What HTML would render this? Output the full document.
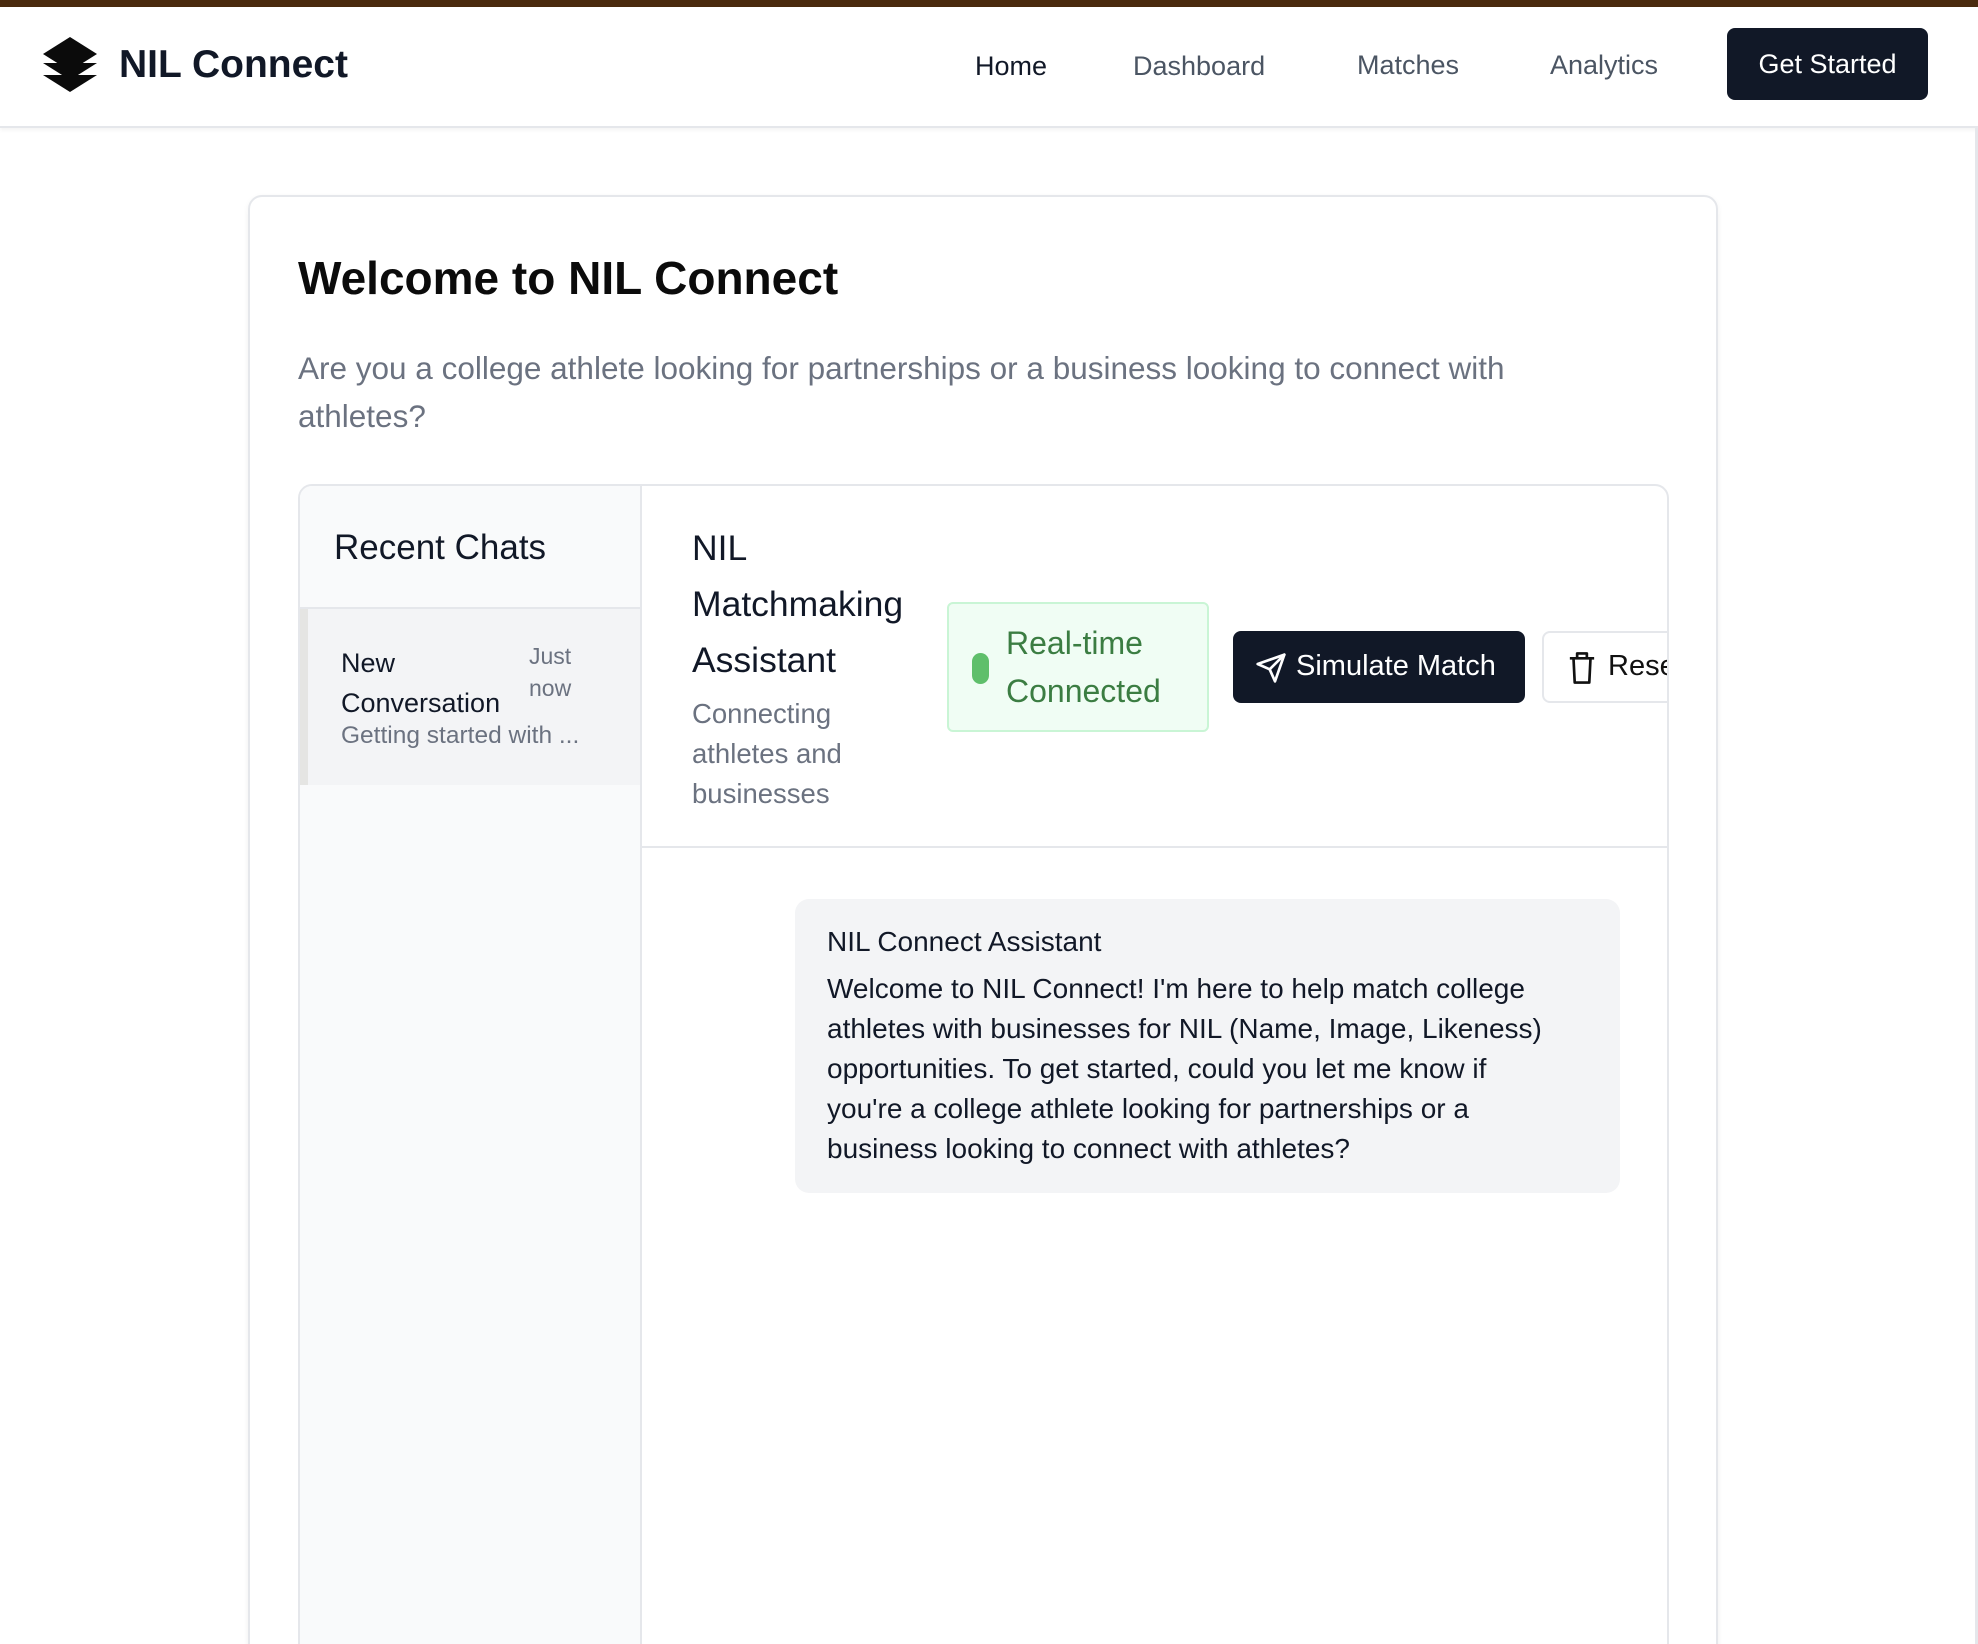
<!DOCTYPE html>
<html><head><meta charset="utf-8"><style>
*{margin:0;padding:0;box-sizing:border-box}
html,body{width:1978px;height:1644px;overflow:hidden}
body{background:#fff;font-family:"Liberation Sans",sans-serif;color:#111827;position:relative}
#w{position:absolute;left:0;top:0;width:1978px;height:1644px;overflow:hidden}
.a{position:absolute;white-space:nowrap}
</style></head><body><div id="w">
<div class="a" style="left:0;top:0;width:1978px;height:7px;background:#4a2a0e"></div>
<div class="a" style="left:0;top:7px;width:1978px;height:121px;border-bottom:2px solid #e5e7eb;box-shadow:0 2px 4px rgba(0,0,0,.05)"></div>
<svg class="a" style="left:43px;top:37px" width="54" height="55" viewBox="0 0 54 55">
<polygon points="27,0 54,17 27,34 0,17" fill="#0b0b0b"/>
<polygon points="0,26 54,26 27,43" fill="#0b0b0b"/>
<polygon points="0,38 54,38 27,55" fill="#0b0b0b"/>
</svg>
<div class="a" style="left:119px;top:43px;font-size:39px;font-weight:700;color:#111827">NIL Connect</div>
<div class="a" style="left:975px;top:51px;font-size:27px;color:#111827">Home</div>
<div class="a" style="left:1133px;top:51px;font-size:27px;color:#4b5563">Dashboard</div>
<div class="a" style="left:1357px;top:50px;font-size:27px;color:#4b5563">Matches</div>
<div class="a" style="left:1550px;top:50px;font-size:27px;color:#4b5563">Analytics</div>
<div class="a" style="left:1727px;top:28px;width:201px;height:72px;background:#111827;border-radius:8px;color:#fff;font-size:27px;text-align:center;line-height:72px">Get Started</div>
<div class="a" style="left:1975px;top:128px;width:3px;height:1516px;background:#e5e7eb"></div>

<div class="a" style="left:248px;top:195px;width:1470px;height:1600px;border:2px solid #e5e7eb;border-radius:14px;box-shadow:0 2px 6px rgba(0,0,0,.06)"></div>
<div class="a" style="left:298px;top:251px;font-size:46px;font-weight:700;color:#0b0b0b">Welcome to NIL Connect</div>
<div class="a" style="left:298px;top:344px;font-size:31.5px;color:#6b7280;line-height:48px">Are you a college athlete looking for partnerships or a business looking to connect with<br>athletes?</div>

<div class="a" style="left:298px;top:484px;width:1371px;height:1300px;border:2px solid #e5e7eb;border-radius:14px;overflow:hidden">
  <div class="a" style="left:0;top:0;width:342px;height:1300px;background:#f9fafb;border-right:2px solid #e5e7eb"></div>
  <div class="a" style="left:34px;top:42px;font-size:35px;color:#111827">Recent Chats</div>
  <div class="a" style="left:0;top:121px;width:340px;height:2px;background:#e5e7eb"></div>
  <div class="a" style="left:0;top:123px;width:340px;height:176px;background:#f3f4f6;border-left:8px solid #e5e5e3"></div>
  <div class="a" style="left:41px;top:157px;font-size:27px;line-height:40px;color:#111827">New<br>Conversation</div>
  <div class="a" style="left:229px;top:154px;font-size:23px;line-height:32px;color:#6b7280">Just<br>now</div>
  <div class="a" style="left:41px;top:236px;font-size:24.5px;color:#6b7280">Getting started with ...</div>

  <div class="a" style="left:392px;top:34px;font-size:35.5px;line-height:56px;font-weight:500;color:#111827">NIL<br>Matchmaking<br>Assistant</div>
  <div class="a" style="left:392px;top:208px;font-size:27.5px;line-height:40px;color:#6b7280">Connecting<br>athletes and<br>businesses</div>
  <div class="a" style="left:647px;top:116px;width:262px;height:130px;background:#f0fdf4;border:2px solid #c9f5d5;border-radius:6px"></div>
  <div class="a" style="left:672px;top:167px;width:17px;height:31px;background:#5fbf6b;border-radius:9px"></div>
  <div class="a" style="left:706px;top:133px;font-size:32px;line-height:48px;color:#3b7d42">Real-time<br>Connected</div>
  <div class="a" style="left:933px;top:145px;width:292px;height:72px;background:#111827;border-radius:8px"></div>
  <svg class="a" style="left:955px;top:166px" width="32" height="32" viewBox="0 0 24 24" fill="none" stroke="#fff" stroke-width="2" stroke-linejoin="round" stroke-linecap="round"><path d="M22 2 11 13"/><path d="M22 2 15 22 11 13 2 9z"/></svg>
  <div class="a" style="left:996px;top:164px;font-size:29px;color:#fff">Simulate Match</div>
  <div class="a" style="left:1242px;top:145px;width:200px;height:72px;background:#fff;border:2px solid #e5e7eb;border-radius:8px"></div>
  <svg class="a" style="left:1267px;top:165px" width="30" height="34" viewBox="0 0 24 28" fill="none" stroke="#111" stroke-width="2.2" stroke-linejoin="round"><path d="M2 6h20M8 6V2h8v4M5 6l1 20h12l1-20"/></svg>
  <div class="a" style="left:1308px;top:164px;font-size:29px;color:#111">Reset</div>
  <div class="a" style="left:342px;top:360px;width:1029px;height:2px;background:#e5e7eb"></div>

  <div class="a" style="left:495px;top:413px;width:825px;height:294px;background:#f3f4f6;border-radius:14px"></div>
  <div class="a" style="left:527px;top:440px;font-size:28px;font-weight:500;color:#111827">NIL Connect Assistant</div>
  <div class="a" style="left:527px;top:483px;font-size:28px;line-height:40px;color:#111827">Welcome to NIL Connect! I'm here to help match college<br>athletes with businesses for NIL (Name, Image, Likeness)<br>opportunities. To get started, could you let me know if<br>you're a college athlete looking for partnerships or a<br>business looking to connect with athletes?</div>
</div>
</div></body></html>
